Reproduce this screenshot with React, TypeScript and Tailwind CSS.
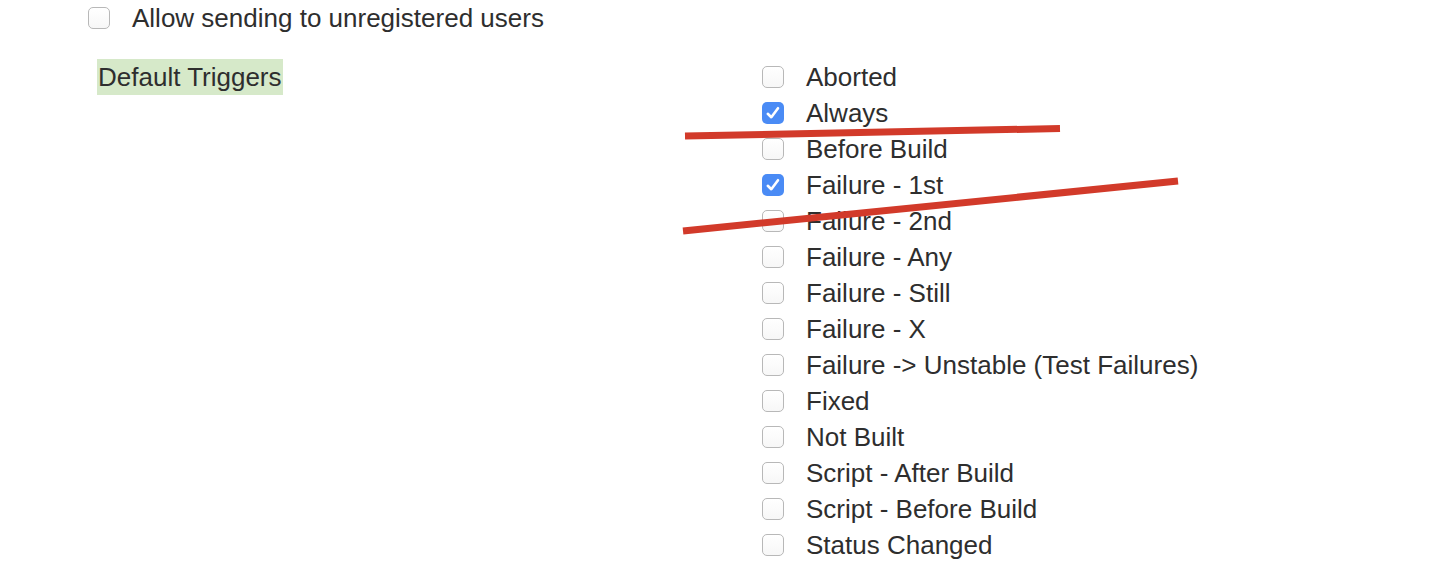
import React from "react";

const items: { label: string; checked?: boolean }[] = [
  { label: "Aborted" },
  { label: "Always", checked: true },
  { label: "Before Build" },
  { label: "Failure - 1st", checked: true },
  { label: "Failure - 2nd" },
  { label: "Failure - Any" },
  { label: "Failure - Still" },
  { label: "Failure - X" },
  { label: "Failure -> Unstable (Test Failures)" },
  { label: "Fixed" },
  { label: "Not Built" },
  { label: "Script - After Build" },
  { label: "Script - Before Build" },
  { label: "Status Changed" },
];

function Box({ checked }: { checked?: boolean }) {
  if (checked) {
    return (
      <span className="flex h-[22px] w-[22px] shrink-0 items-center justify-center rounded-[5px] bg-[#4a8bf5]">
        <svg width="16" height="16" viewBox="0 0 16 16" fill="none">
          <path d="M2.8 8.8 L6.3 12.2 L13 3.2" stroke="white" strokeWidth="2.6" strokeLinecap="round" strokeLinejoin="round" />
        </svg>
      </span>
    );
  }
  return (
    <span className="block h-[22px] w-[22px] shrink-0 rounded-[5px] border border-[#b8b8b8] bg-gradient-to-b from-white to-[#f7f7f7]" />
  );
}

export default function App() {
  return (
    <div
      className="relative h-[566px] w-[1432px] overflow-hidden bg-white text-[26px] leading-[36px] text-[#2e2e2e]"
      style={{ fontFamily: '"Liberation Sans", Arial, sans-serif' }}
    >
      <div className="flex h-[36px] items-center pl-[88px]">
        <Box />
        <span className="ml-[22px]">Allow sending to unregistered users</span>
      </div>
      <div className="mt-[23px] flex">
        <div className="w-[762px] shrink-0 pl-[97px]">
          <span className="inline-block bg-[#d6e9c9] px-[1px]">Default Triggers</span>
        </div>
        <div className="flex flex-col">
          {items.map((it) => (
            <div key={it.label} className="flex h-[36px] items-center">
              <Box checked={it.checked} />
              <span className="ml-[22px]">{it.label}</span>
            </div>
          ))}
        </div>
      </div>
      <svg className="pointer-events-none absolute left-0 top-0" width="1432" height="566">
        <line x1="685" y1="136" x2="1060" y2="128.5" stroke="#d23a2a" strokeWidth="7" />
        <line x1="683" y1="231" x2="1178" y2="181" stroke="#d23a2a" strokeWidth="7" />
      </svg>
    </div>
  );
}
